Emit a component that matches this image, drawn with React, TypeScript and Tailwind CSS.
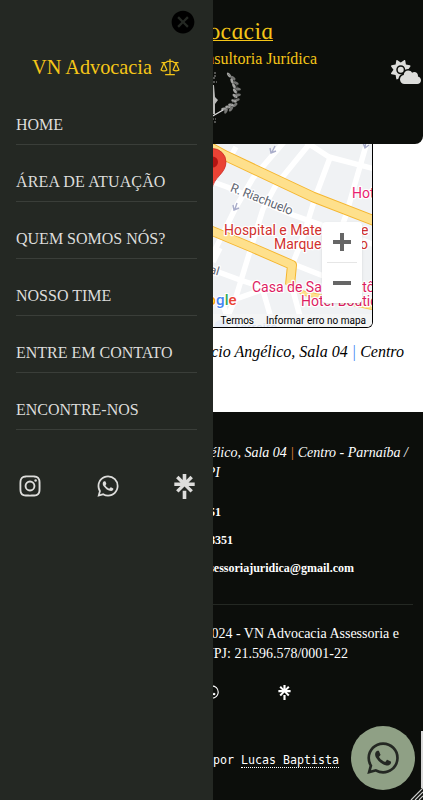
import React from 'react';
import { FaCloudSun } from 'react-icons/fa6';
import { IoMdCloseCircle } from 'react-icons/io';
import { BiLogoInstagram, BiLogoWhatsapp } from 'react-icons/bi';
import { GoLaw } from 'react-icons/go';
import { SiLinktree } from 'react-icons/si';

const links = [
  { label: 'HOME', spacing: 'tracking-normal' },
  { label: 'ÁREA DE ATUAÇÃO', spacing: 'tracking-[0.13px]' },
  { label: 'QUEM SOMOS NÓS?', spacing: 'tracking-normal' },
  { label: 'NOSSO TIME', spacing: 'tracking-normal' },
  { label: 'ENTRE EM CONTATO', spacing: 'tracking-normal' },
  { label: 'ENCONTRE-NOS', spacing: 'tracking-normal' },
];

// Leaves of the right laurel branch: x, y, rotation
const leaves = [
  [18, 4, 50], [22, 7, 35], [21, 10, 70], [25, 12, 25], [23, 15, 60], [27, 18, 10], [24, 20, 50],
  [27, 24, -5], [24, 25, 35], [26, 29, -20], [23, 30, 20], [24, 34, -35], [20, 34, 10], [20, 38, -50],
  [17, 36, 0], [15, 40, -60], [13, 38, -5],
];

function Emblem() {
  return (
    <svg width="60" height="54" viewBox="-30 0 60 54" fill="#b8b8b6">
      {[1, -1].map((side) => (
        <g key={side} transform={`scale(${side} 1)`}>
          {leaves.map(([x, y, r], i) => (
            <ellipse key={i} cx={x} cy={y} rx="2.9" ry="1.4" transform={`rotate(${r} ${x} ${y})`} fill={i % 2 ? '#777775' : '#a5a5a3'} />
          ))}
          <path d="M1 45 C10 40 21 38 25 25 S22 7 17 3" fill="none" stroke="#666" strokeWidth=".6" />
          <path d="M0 46 L12 39" stroke="#ddd" strokeWidth="1.1" />
        </g>
      ))}
      <path d="M-3 14 H3 L4 26 L7 29 L4 33 L4 43 H-4 L-4 33 L-7 29 L-4 26Z" />
      <path d="M-6 51 H6 M-5 48 H5 M4 1 V6 M2 7 H5 M2 11 H6" stroke="#999" strokeWidth="1" strokeDasharray="2 1" />
    </svg>
  );
}

function MapView() {
  return (
    <svg width="321" height="183" viewBox="51 144 321 183" className="block" fontFamily="Roboto, sans-serif">
      <rect x="51" y="144" width="321" height="183" fill="#f0f2f4" />
      <g fill="none" stroke="#fff" strokeWidth="5.5" strokeLinejoin="round">
        <path d="M205 179 L227 187 L293 215 L330 228 L375 245" />
        <path d="M284 142 L253 178 L236 207 L211 258" />
        <path d="M311 142 L276 185 L263 209 L246 264 L236 297 L222 330" />
        <path d="M331 155 L316 195 L302 240 L291 268" />
        <path d="M367 142 L346 215 L330 260" />
        <path d="M306 142 L329 157 L375 169" />
        <path d="M232 154 L236 147" />
        <path d="M213 270 L240 280 L262 287 L271 318" />
        <path d="M236 299 L264 289" />
        <path d="M291 283 L301 320" />
        <path d="M293 264 L326 277" />
        <path d="M213 262 L220 248" />
        <path d="M222 301 L228 320" />
      </g>
      <g fill="none" strokeLinejoin="round">
        <path d="M200 142 L226 156 L313 197 L375 221" stroke="#f5b62f" strokeWidth="10.5" />
        <path d="M205 228 L253 248 L292 265 L290 285" stroke="#f5b62f" strokeWidth="10" />
        <path d="M289 284 L303 293 L375 308" stroke="#f5c04b" strokeWidth="5" />
        <path d="M289 283 L303 293 L375 308" stroke="#fee08c" strokeWidth="3.6" />
        <path d="M200 142 L226 156 L313 197 L375 221" stroke="#fee08c" strokeWidth="8.6" />
        <path d="M205 228 L253 248 L292 265 L290 285" stroke="#fee08c" strokeWidth="8" />
      </g>
      <g fill="none" stroke="#a9adca" strokeWidth="1.4">
        <path d="M275 146 L272 152 M270 148 L271 153 L276 151" />
        <path d="M237 203 L235 209 M233 205 L234 210 L239 208" />
        <path d="M366 142 L365 147 M363 143 L365 148 L369 145" />
      </g>
      <g stroke="#fff" strokeWidth="2.4" strokeLinejoin="round" paintOrder="stroke">
        <text x="229.5" y="191" fontSize="12.6" fill="#5f6672" transform="rotate(21.5 229.5 191)" textLength="66">R. Riachuelo</text>
        <text x="209" y="273" fontSize="12" fill="#5f6672" transform="rotate(16 209 273)">al</text>
        <text x="352" y="198" fontSize="14" fill="#e91e70">Hotel</text>
        <text x="224" y="235" fontSize="14" fill="#d1312e" textLength="144.5">Hospital e Maternidade</text>
        <text x="274" y="249" fontSize="14" fill="#d1312e" textLength="94">Marques Basto</text>
        <text x="252" y="292" fontSize="14" fill="#dd1d62">Casa de Santo Antônio</text>
        <text x="301" y="306" fontSize="14" fill="#dd1d62">Hotel Boutique</text>
      </g>
      <circle cx="221" cy="327" r="7" fill="#b8cef5" />
      <text x="233" y="332" fontSize="13" fill="#6f9bea">Terreiro</text>
      <text x="236.5" y="305" fontSize="15" fontWeight="500" textAnchor="end" stroke="#fff" strokeWidth="2" paintOrder="stroke">
        <tspan fill="#4285f4">G</tspan><tspan fill="#ea4335">o</tspan><tspan fill="#fbaa05">o</tspan><tspan fill="#4285f4">g</tspan><tspan fill="#34a853">l</tspan><tspan fill="#ea4335">e</tspan>
      </text>
      <path d="M212 190 C211 179 199 175 199 162 A13.5 13.5 0 0 1 226 162 C226 174 213 177 212 190Z" fill="#ea4335" stroke="#c5221f" strokeWidth=".7" />
      <circle cx="212.5" cy="162" r="5.5" fill="#b31412" />
      <rect x="51" y="314" width="321" height="13" fill="#f5f5f5" fillOpacity=".75" />
      <g fontSize="10" fill="#000">
        <text x="220.5" y="324" textLength="33.5">Termos</text>
        <text x="266" y="324" textLength="100">Informar erro no mapa</text>
      </g>
    </svg>
  );
}

export default function App() {
  return (
    <div className="relative h-[800px] w-[423px] overflow-hidden bg-white font-['Liberation_Serif',serif] whitespace-nowrap">
      <header className="relative flex h-36 flex-col items-center rounded-b-lg bg-[#0c0e0b] pt-[17px] text-[#f5c518]">
        <h1 className="mr-[3px] h-[24px] w-[126px] border-b border-[#f5c518] text-right text-[24px] leading-[28px]">
          <span className="inline-block skew-x-[10deg] italic tracking-[0.2px]">Advocacia</span>
        </h1>
        <p className="mt-2 mr-0.5 w-[213px] text-right text-base leading-5">Assessoria e Consultoria Jurídica</p>
        <div className="mt-0.5 mr-0.5"><Emblem /></div>
        <FaCloudSun size={30} className="absolute top-[57px] left-[391px] text-[#dddddb]" />
      </header>
      <main className="h-[268px]">
        <div className="relative ml-[50px] h-[184px] w-[323px] overflow-hidden rounded-b-md border-x border-b border-black">
          <MapView />
          <div className="absolute top-[78px] left-[271px] flex h-[81px] w-10 flex-col items-center rounded-sm bg-white shadow-sm">
            <div className="flex h-[41px] w-[30px] items-center justify-center border-b border-[#e6e6e6]">
              <svg width="18" height="18" viewBox="0 0 18 18"><path d="M9 0V18M0 9H18" stroke="#666" strokeWidth="4" /></svg>
            </div>
            <div className="flex h-10 items-center">
              <div className="h-1 w-[18px] bg-[#666]" />
            </div>
          </div>
        </div>
        <p className="mt-[14px] w-[404px] text-right text-base leading-5 text-black italic">
          Edifício Inácio Angélico, Sala 04 <span className="text-[#3b82f6]">|</span> Centro
        </p>
      </main>
      <footer className="h-[388px] bg-[#0c0e0b] pt-[31px] text-white">
        <address className="text-sm leading-5">
          <p className="w-[408px] text-right">Edifício Inácio Angélico, Sala 04 <span className="text-[#f08a3c]">|</span> Centro - Parnaíba /</p>
          <p className="w-[220px] text-right">PI</p>
        </address>
        <div className="mt-[15px] text-xs leading-7 font-bold">
          <p className="w-[221px] text-right">(86) 99999-8351</p>
          <p className="w-[233px] text-right">(86) 3322-8351</p>
          <p className="w-[354px] text-right">vnadvocaciaassessoriajuridica@gmail.com</p>
        </div>
        <div className="mt-[22px] w-[413px] border-b border-[#242823]" />
        <div className="mt-[19px] text-sm leading-5">
          <p className="w-[399px] text-right">© 2024 - VN Advocacia Assessoria e</p>
          <p className="w-[348px] text-right">Consultoria - CNPJ: 21.596.578/0001-22</p>
        </div>
        <div className="mt-[20px] flex h-4 w-[292px] items-center justify-end gap-[56px]">
          <BiLogoWhatsapp size={18} />
          <SiLinktree size={15} />
        </div>
        <p className="mt-[52px] w-[339px] text-right font-['DejaVu_Sans_Mono',monospace] text-[11.63px] leading-4">
          Feito por <span className="inline-block border-b border-dotted border-white leading-[14px]">Lucas Baptista</span>
        </p>
      </footer>
      <aside className="absolute top-0 left-0 flex h-full w-[213px] flex-col bg-[#242823] px-4 text-[#dddddb]">
        <IoMdCloseCircle size={28} className="mt-2 self-end text-black" />
        <div className="mt-[19px] flex items-center gap-2 pl-4 text-[20.3px] leading-[24px] text-[#f5c518]">
          <span className="w-[120px]">VN Advocacia</span>
          <GoLaw size={20} />
        </div>
        <nav className="mt-[9px]">
          {links.map(({ label, spacing }) => (
            <a key={label} className={`block h-[57px] w-[181px] border-b border-[#3a3e39] pt-[27px] text-base leading-5 ${spacing}`}>{label}</a>
          ))}
        </nav>
        <div className="mt-[42px] flex items-center justify-between">
          <BiLogoInstagram size={28} />
          <BiLogoWhatsapp size={28} />
          <SiLinktree size={25} />
        </div>
      </aside>
      <div className="absolute top-[726px] left-[351px] flex size-16 items-center justify-center rounded-full bg-[#8fa085] text-[#242823]">
        <BiLogoWhatsapp size={42} />
      </div>
      <div className="absolute top-[731px] right-0 h-[57px] w-0.5 bg-[#d9d9d9]" />
      <svg className="absolute right-0 bottom-0" width="13" height="13" viewBox="0 0 13 13" stroke="#ccc" strokeWidth="1.2"><path d="M1 13 L13 1 M5 13 L13 5 M9 13 L13 9" /></svg>
    </div>
  );
}
